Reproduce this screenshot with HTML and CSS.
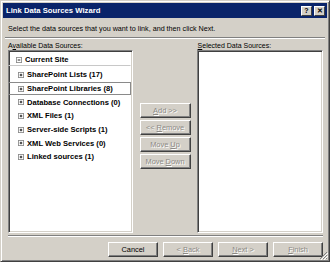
FILE: index.html
```html
<html>
	<head>
		<title>Link Data Sources Wizard</title>
		<link rel="stylesheet" href="styles.css">
	</head>
	<body>
		<div class="window">
			<div class="titlebar">
				<span class="title">Link Data Sources Wizard</span>
				<span class="caption-btns">
					<span class="caption-btn">?</span>
					<span class="caption-btn close">&#10005;</span>
				</span>
			</div>
			<p class="intro">Select the data sources that you want to link, and then click Next.</p>
			<div class="rule"></div>
			<div class="labels">
				<span>A<u>v</u>ailable Data Sources:</span>
				<span class="label-right"><u>S</u>elected Data Sources:</span>
			</div>
			<div class="main">
				<div class="listbox tree">
					<div class="node root">
						<svg class="exp" viewBox="0 0 7 7"><rect x="0.5" y="0.5" width="6" height="6" fill="#fff" stroke="#8a8a8a"/><path d="M2 3.5h3" stroke="#000"/></svg>
						<span>Current Site</span>
					</div>
					<div class="node"><svg class="exp" viewBox="0 0 7 7"><rect x="0.5" y="0.5" width="6" height="6" fill="#fff" stroke="#8a8a8a"/><path d="M2 3.5h3M3.5 2v3" stroke="#000"/></svg><span>SharePoint Lists (17)</span></div>
					<div class="node focus"><svg class="exp" viewBox="0 0 7 7"><rect x="0.5" y="0.5" width="6" height="6" fill="#fff" stroke="#8a8a8a"/><path d="M2 3.5h3M3.5 2v3" stroke="#000"/></svg><span>SharePoint Libraries (8)</span></div>
					<div class="node"><svg class="exp" viewBox="0 0 7 7"><rect x="0.5" y="0.5" width="6" height="6" fill="#fff" stroke="#8a8a8a"/><path d="M2 3.5h3M3.5 2v3" stroke="#000"/></svg><span>Database Connections (0)</span></div>
					<div class="node"><svg class="exp" viewBox="0 0 7 7"><rect x="0.5" y="0.5" width="6" height="6" fill="#fff" stroke="#8a8a8a"/><path d="M2 3.5h3M3.5 2v3" stroke="#000"/></svg><span>XML Files (1)</span></div>
					<div class="node"><svg class="exp" viewBox="0 0 7 7"><rect x="0.5" y="0.5" width="6" height="6" fill="#fff" stroke="#8a8a8a"/><path d="M2 3.5h3M3.5 2v3" stroke="#000"/></svg><span>Server-side Scripts (1)</span></div>
					<div class="node"><svg class="exp" viewBox="0 0 7 7"><rect x="0.5" y="0.5" width="6" height="6" fill="#fff" stroke="#8a8a8a"/><path d="M2 3.5h3M3.5 2v3" stroke="#000"/></svg><span>XML Web Services (0)</span></div>
					<div class="node"><svg class="exp" viewBox="0 0 7 7"><rect x="0.5" y="0.5" width="6" height="6" fill="#fff" stroke="#8a8a8a"/><path d="M2 3.5h3M3.5 2v3" stroke="#000"/></svg><span>Linked sources (1)</span></div>
				</div>
				<div class="middle">
					<span class="btn disabled"><u>A</u>dd &gt;&gt;</span>
					<span class="btn disabled">&lt;&lt; <u>R</u>emove</span>
					<span class="btn disabled">Move <u>U</u>p</span>
					<span class="btn disabled">Move <u>D</u>own</span>
				</div>
				<div class="listbox"></div>
			</div>
			<div class="rule rule-bottom"></div>
			<div class="footer">
				<span class="btn">Cancel</span>
				<span class="btn disabled">&lt; <u>B</u>ack</span>
				<span class="btn disabled"><u>N</u>ext &gt;</span>
				<span class="btn disabled"><u>F</u>inish</span>
			</div>
			<svg class="grip" viewBox="0 0 10 10"><path d="M9 2L2 9M9 5L5 9M9 8L8 9" stroke="#808080" stroke-width="1"/><path d="M10 3L3 10M10 6L6 10" stroke="#fff" stroke-width="1"/></svg>
		</div>
	</body>
</html>
```

FILE: styles.css
```css
* {
	margin: 0;
	padding: 0;
	box-sizing: border-box;
}

body {
	background: #fff;
	font-family: 'Liberation Sans', Arial, sans-serif;
	font-size: 7px;
	color: #000;
}

.window {
	position: relative;
	width: 330px;
	height: 262px;
	background: #d4d0c8;
	border: 1px solid;
	border-color: #d4d0c8 #404040 #404040 #d4d0c8;
	box-shadow: inset 1px 1px #fff, inset -1px -1px #808080;
	padding: 2px;
	display: flex;
	flex-direction: column;
}

.titlebar {
	height: 15px;
	background: #0a246a;
	display: flex;
	align-items: center;
	justify-content: space-between;
	padding: 0 2px 0 3px;
}

.title {
	color: #fff;
	font-weight: bold;
	font-size: 7.7px;
}

.caption-btns {
	display: flex;
	gap: 2px;
}

.caption-btn {
	width: 11px;
	height: 10px;
	background: #d4d0c8;
	border: 1px solid;
	border-color: #fff #404040 #404040 #fff;
	font-weight: bold;
	font-size: 7px;
	line-height: 8px;
	text-align: center;
}

.intro {
	margin: 6px 0 0 5px;
	line-height: 10px;
	font-size: 7.2px;
}

.rule {
	margin: 3px 2px 0;
	height: 2px;
	border-top: 1px solid #808080;
	border-bottom: 1px solid #fff;
}

.labels {
	display: flex;
	margin: 2px 0 0 5px;
	height: 9px;
	line-height: 9px;
}

.label-right {
	margin-left: 115px;
}

.main {
	display: flex;
	height: 183px;
	margin: 0 4px 0 5px;
}

.listbox {
	width: 126px;
	height: 100%;
	background: #fff;
	border: 1px solid;
	border-color: #808080 #fff #fff #808080;
	box-shadow: inset 1px 1px #404040, inset -1px -1px #d4d0c8;
}

.tree {
	width: 125px;
	padding: 2px 1px 0 2px;
	font-weight: bold;
	font-size: 7.6px;
}

.node {
	display: flex;
	align-items: center;
	gap: 3px;
	height: 13.7px;
	padding-left: 9px;
	border: 1px solid transparent;
	margin-left: -3px;
}

.node.root {
	padding-left: 7px;
	height: 13px;
	border-bottom: 1px solid #c8c8c8;
	margin-bottom: 2px;
}

.node.focus {
	border: 1px solid #8a8a8a;
}

.exp {
	width: 6px;
	height: 6px;
	flex: none;
}

.middle {
	width: 64px;
	padding-top: 53px;
	display: flex;
	flex-direction: column;
	align-items: center;
	gap: 2px;
}

.btn {
	display: flex;
	align-items: center;
	justify-content: center;
	width: 51px;
	height: 15px;
	background: #d4d0c8;
	border: 1px solid;
	border-color: #fff #404040 #404040 #fff;
	box-shadow: inset -1px -1px #808080;
	font-size: 7.4px;
	white-space: pre;
}

.btn.disabled {
	color: #8c8a85;
	text-shadow: 1px 1px #fff;
}

.rule-bottom {
	margin: 2px 4px 0 5px;
}

.footer {
	display: flex;
	justify-content: flex-end;
	gap: 5px;
	margin: 5px 4px 0 0;
}

.footer .btn {
	width: 50px;
}

.grip {
	position: absolute;
	right: 1px;
	bottom: 1px;
	width: 10px;
	height: 10px;
}
```
